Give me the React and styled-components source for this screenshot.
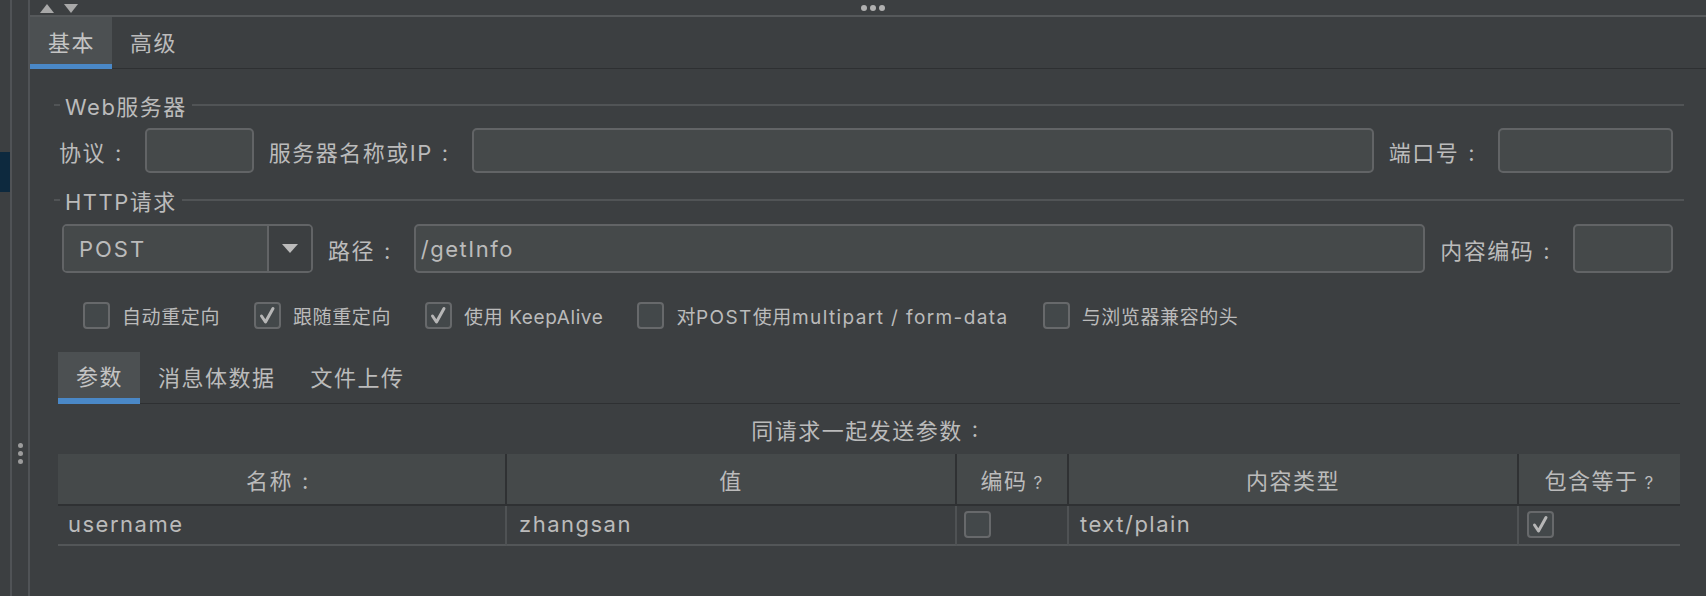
import React from 'react'
import styled, { createGlobalStyle } from 'styled-components'

const FONT = `"Inter", "Noto Sans CJK SC", sans-serif`

const GlobalStyle = createGlobalStyle`
  html, body {
    margin: 0;
    padding: 0;
    background: #3c3f41;
  }
  body {
    font-family: ${FONT};
    color: #bbbbbb;
    overflow: hidden;
  }
  * {
    box-sizing: border-box;
  }
`

const Frame = styled.div`
  display: flex;
  width: 1706px;
  height: 596px;
  background: #3c3f41;
`

const OuterGutter = styled.div`
  width: 12px;
  flex: none;
  border-right: 2px solid #505356;
  padding-top: 152px;
`

const Selection = styled.div`
  height: 40px;
  background: #0d293e;
`

const InnerGutter = styled.div`
  width: 18px;
  flex: none;
  border-right: 2px solid #505356;
  display: flex;
  flex-direction: column;
  align-items: center;
  padding-top: 443px;
  gap: 3px;
`

const GripDot = styled.span`
  width: 5px;
  height: 5px;
  border-radius: 50%;
  background: #9c9c9c;
`

const Main = styled.div`
  flex: 1;
  min-width: 0;
  display: flex;
  flex-direction: column;
`

const TopStrip = styled.div`
  height: 17px;
  border-bottom: 2px solid #56595b;
  display: grid;
  grid-template-columns: 1fr auto 1fr;
  align-items: center;
  padding: 1px 0 0 10px;
`

const Arrows = styled.div`
  display: flex;
  gap: 10px;
`

const Arrow = styled.span`
  width: 0;
  height: 0;
  border-left: 7px solid transparent;
  border-right: 7px solid transparent;
  ${({ $down }) =>
    $down ? 'border-top: 9px solid #a8a8a8;' : 'border-bottom: 9px solid #a8a8a8;'}
`

const Handle = styled.div`
  display: flex;
  gap: 3px;
`

const HandleDot = styled.span`
  width: 6px;
  height: 6px;
  border-radius: 50%;
  background: #b0b0b0;
`

const TabBar = styled.div`
  display: flex;
  height: 52px;
  flex: none;
  box-shadow: inset 0 -1px 0 #2e3032;
  margin: ${({ $inset }) => ($inset ? '0 4px' : '0')};
`

const Tab = styled.div`
  display: flex;
  align-items: center;
  height: 52px;
  padding: 0 17px 0 18px;
  font-size: 22px;
  letter-spacing: 1.5px;
  color: ${({ $active }) => ($active ? '#c4c4c4' : '#bbbbbb')};
  background: ${({ $active }) => ($active ? '#4c5052' : 'transparent')};
  border-bottom: ${({ $thick }) => ($thick ? 6 : 5)}px solid
    ${({ $active }) => ($active ? '#4a88c7' : 'transparent')};
`

const Content = styled.div`
  display: flex;
  flex-direction: column;
  padding: 21px 22px 0 24px;
`

const GroupTitle = styled.div`
  display: flex;
  align-items: center;
  height: 30px;
  gap: 5px;
  font-size: 22px;
  letter-spacing: 1.5px;
  margin-top: ${({ $mt }) => $mt || 0}px;

  &::before {
    content: '';
    width: 6px;
    height: 2px;
    background: #515456;
  }

  &::after {
    content: '';
    flex: 1;
    height: 2px;
    background: #515456;
  }
`

const FieldRow = styled.div`
  display: flex;
  align-items: center;
  gap: 15px;
  height: ${({ $h }) => $h}px;
  margin-top: ${({ $mt }) => $mt}px;
  padding: 0 11px 0 ${({ $pl }) => $pl}px;
`

const Label = styled.span`
  font-size: 22px;
  letter-spacing: 1.5px;
  white-space: nowrap;
  flex: none;
`

const Colon = styled.span`
  margin: 0 7px 0 9px;
`

const TextInput = styled.input`
  height: 100%;
  width: ${({ $w }) => ($w ? `${$w}px` : 'auto')};
  flex: ${({ $grow }) => ($grow ? '1 1 0' : 'none')};
  min-width: 0;
  margin: 0;
  padding: 0 5px;
  background: #45494a;
  border: 2px solid #626466;
  border-radius: 5px;
  color: #bbbbbb;
  font-family: ${FONT};
  font-size: 22px;
  letter-spacing: 1.5px;
  outline: none;
`

const Combo = styled.div`
  display: flex;
  width: 251px;
  height: 100%;
  flex: none;
  border: 2px solid #626466;
  border-radius: 5px;
  overflow: hidden;
`

const ComboValue = styled.div`
  flex: 1;
  display: flex;
  align-items: center;
  padding-left: 15px;
  background: #45494a;
  border-right: 2px solid #626466;
  font-size: 22px;
  letter-spacing: 2px;
`

const ComboButton = styled.div`
  width: 42px;
  display: flex;
  align-items: center;
  justify-content: center;
  background: #3c3f41;
`

const Caret = styled.span`
  width: 0;
  height: 0;
  border-left: 8px solid transparent;
  border-right: 8px solid transparent;
  border-top: 9px solid #bbbbbb;
`

const OptionRow = styled.div`
  display: flex;
  align-items: center;
  gap: 34px;
  height: 27px;
  margin-top: 29px;
  padding-left: 29px;
`

const Option = styled.label`
  display: flex;
  align-items: center;
  gap: 12px;
  font-size: 19px;
  letter-spacing: 0.6px;
  white-space: nowrap;
`

const Wide = styled.span`
  letter-spacing: 1.4px;
`

const Box = styled.span`
  width: 27px;
  height: 27px;
  flex: none;
  display: flex;
  align-items: center;
  justify-content: center;
  background: #43484a;
  border: 2px solid #67696b;
  border-radius: 4px;
`

const SubTabs = styled(TabBar)`
  margin-top: 23px;
`

const Caption = styled.div`
  height: 50px;
  display: flex;
  align-items: center;
  justify-content: center;
  font-size: 22px;
  letter-spacing: 1.5px;
`

const Table = styled.div`
  display: grid;
  grid-template-columns: 449px 450px 112px 450px 161px;
  margin: 0 4px;
`

const HeadCell = styled.div`
  height: 52px;
  display: flex;
  align-items: center;
  justify-content: center;
  background: #45494a;
  border-bottom: 2px solid #2f3133;
  border-right: ${({ $last }) => ($last ? 'none' : '2px solid #2f3133')};
  font-size: 22px;
  letter-spacing: 1.5px;
`

const HeadText = styled.span`
  display: inline-block;
`

const Cell = styled.div`
  height: 40px;
  display: flex;
  align-items: center;
  padding-left: ${({ $pl }) => $pl || 10}px;
  padding-bottom: 2px;
  border-bottom: 2px solid #535658;
  border-right: ${({ $last }) => ($last ? 'none' : '2px solid #4f5254')};
  font-size: 22px;
  letter-spacing: 1.5px;
`

const Hint = styled.span`
  font-size: 17px;
  margin-left: 6px;
`

function Checkbox({ checked }) {
  return (
    <Box>
      {checked && (
        <svg width='19' height='19' viewBox='0 0 19 19'>
          <path
            d='M3.5 10 L7.5 16 L15 2.5'
            fill='none'
            stroke='#b6b6b6'
            strokeWidth='3'
            strokeLinecap='round'
            strokeLinejoin='round'
          />
        </svg>
      )}
    </Box>
  )
}

const options = [
  { id: 'redirect', label: '自动重定向', checked: false },
  { id: 'follow', label: '跟随重定向', checked: true },
  { id: 'keepalive', label: '使用 KeepAlive', checked: true },
  {
    id: 'multipart',
    label: (
      <>
        对<Wide>POST</Wide>使用<Wide>multipart / form-data</Wide>
      </>
    ),
    checked: false,
  },
  { id: 'browser', label: '与浏览器兼容的头', checked: false },
]

export default function App() {
  return (
    <>
      <GlobalStyle />
      <Frame>
        <OuterGutter>
          <Selection />
        </OuterGutter>
        <InnerGutter>
          <GripDot />
          <GripDot />
          <GripDot />
        </InnerGutter>
        <Main>
          <TopStrip>
            <Arrows>
              <Arrow />
              <Arrow $down />
            </Arrows>
            <Handle>
              <HandleDot />
              <HandleDot />
              <HandleDot />
            </Handle>
            <span />
          </TopStrip>
          <TabBar>
            <Tab $active>基本</Tab>
            <Tab>高级</Tab>
          </TabBar>
          <Content>
            <GroupTitle>Web服务器</GroupTitle>
            <FieldRow $h={45} $mt={8} $pl={5}>
              <Label>
                协议<Colon>:</Colon>
              </Label>
              <TextInput $w={109} readOnly value='' />
              <Label>
                服务器名称或IP<Colon>:</Colon>
              </Label>
              <TextInput $grow readOnly value='' />
              <Label>
                端口号<Colon>:</Colon>
              </Label>
              <TextInput $w={175} readOnly value='' />
            </FieldRow>
            <GroupTitle $mt={12}>HTTP请求</GroupTitle>
            <FieldRow $h={49} $mt={9} $pl={8}>
              <Combo>
                <ComboValue>POST</ComboValue>
                <ComboButton>
                  <Caret />
                </ComboButton>
              </Combo>
              <Label>
                路径<Colon>:</Colon>
              </Label>
              <TextInput $grow readOnly value='/getInfo' />
              <Label>
                内容编码<Colon>:</Colon>
              </Label>
              <TextInput $w={100} readOnly value='' />
            </FieldRow>
            <OptionRow>
              {options.map(o => (
                <Option key={o.id}>
                  <Checkbox checked={o.checked} />
                  <span>{o.label}</span>
                </Option>
              ))}
            </OptionRow>
            <SubTabs $inset>
              <Tab $active $thick>参数</Tab>
              <Tab>消息体数据</Tab>
              <Tab>文件上传</Tab>
            </SubTabs>
            <Caption>
              同请求一起发送参数<Colon>:</Colon>
            </Caption>
            <Table>
              <HeadCell>
                <HeadText>
                  名称<Colon>:</Colon>
                </HeadText>
              </HeadCell>
              <HeadCell>
                <HeadText>值</HeadText>
              </HeadCell>
              <HeadCell>
                <HeadText>
                  编码<Hint>?</Hint>
                </HeadText>
              </HeadCell>
              <HeadCell>
                <HeadText>内容类型</HeadText>
              </HeadCell>
              <HeadCell $last>
                <HeadText>
                  包含等于<Hint>?</Hint>
                </HeadText>
              </HeadCell>
              <Cell>username</Cell>
              <Cell $pl={12}>zhangsan</Cell>
              <Cell $pl={7}>
                <Checkbox />
              </Cell>
              <Cell $pl={11}>text/plain</Cell>
              <Cell $pl={8} $last>
                <Checkbox checked />
              </Cell>
            </Table>
          </Content>
        </Main>
      </Frame>
    </>
  )
}
